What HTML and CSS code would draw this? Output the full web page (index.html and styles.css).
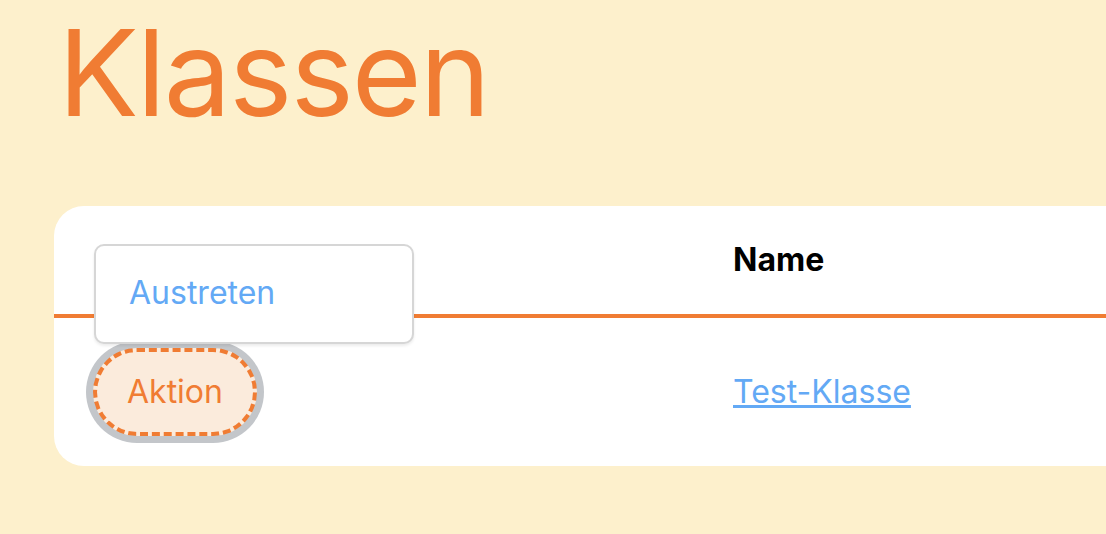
FILE: index.html
```html
<!DOCTYPE html>
<html lang="de">
<head>
<meta charset="utf-8">
<title>Klassen</title>
<link rel="stylesheet" href="styles.css">
</head>
<body>
<main class="page">
  <h1 class="title">Klassen</h1>
  <section class="card">
    <table class="table">
      <colgroup><col class="col-action"><col class="col-name"></colgroup>
      <thead>
        <tr><th class="th-action"></th><th class="th-name">Name</th></tr>
      </thead>
      <tbody>
        <tr>
          <td class="td-action">
            <div class="action-wrap">
              <button class="action-btn" type="button">Aktion</button>
              <div class="menu"><a class="menu-item" href="#">Austreten</a></div>
            </div>
          </td>
          <td class="td-name"><a class="link" href="#">Test-Klasse</a></td>
        </tr>
      </tbody>
    </table>
  </section>
</main>
</body>
</html>
```
FILE: styles.css
```css
html, body {
  margin: 0;
  padding: 0;
}
body {
  background: #fdf0cc;
  font-family: Inter, "Noto Sans", sans-serif;
  overflow: hidden;
  width: 1106px;
  height: 534px;
}
.page {
  padding: 1px 0 0 54px;
}
.title {
  margin: 0;
  padding-left: 4px;
  font-size: 120px;
  line-height: 144px;
  font-weight: 400;
  color: #f07c33;
  letter-spacing: -2px;
}
.card {
  margin-top: 61px;
  width: 1300px;
  background: #fff;
  border-radius: 30px;
}
.table {
  border-collapse: collapse;
  table-layout: fixed;
  width: 100%;
}
.col-action { width: 679px; }
.table th {
  text-align: left;
  font-size: 32px;
  line-height: 48px;
  font-weight: 700;
  color: #000;
  padding: 30px 0;
  border-bottom: 4px solid #f07c33;
}
.table td {
  padding: 30px 0;
  vertical-align: middle;
  font-size: 32px;
  line-height: 48px;
}
.td-action {
  padding-left: 39px !important;
}
.action-wrap {
  position: relative;
  display: inline-block;
}
.action-btn {
  display: block;
  height: 88px;
  padding: 0 30px;
  font-family: Inter, "Noto Sans", sans-serif;
  font-size: 32px;
  line-height: 80px;
  color: #f07c33;
  background: #fbebdc;
  border: 4px dashed #f07c33;
  border-radius: 44px;
  box-shadow: 0 0 0 7px #c3c6ca;
  cursor: pointer;
}
.menu {
  position: absolute;
  left: 1px;
  top: -104px;
  width: 316px;
  height: 96px;
  box-sizing: content-box;
  background: #fff;
  border: 2px solid #d6d6d6;
  border-radius: 10px;
  box-shadow: 0 2px 3px rgba(0,0,0,0.08);
}
.menu-item {
  display: block;
  padding: 23px 34px 25px 33px;
  font-size: 32px;
  line-height: 48px;
  color: #63a9f5;
  text-decoration: none;
}
.link {
  color: #63a9f5;
  text-decoration: underline;
  text-decoration-thickness: 3px;
}
```
